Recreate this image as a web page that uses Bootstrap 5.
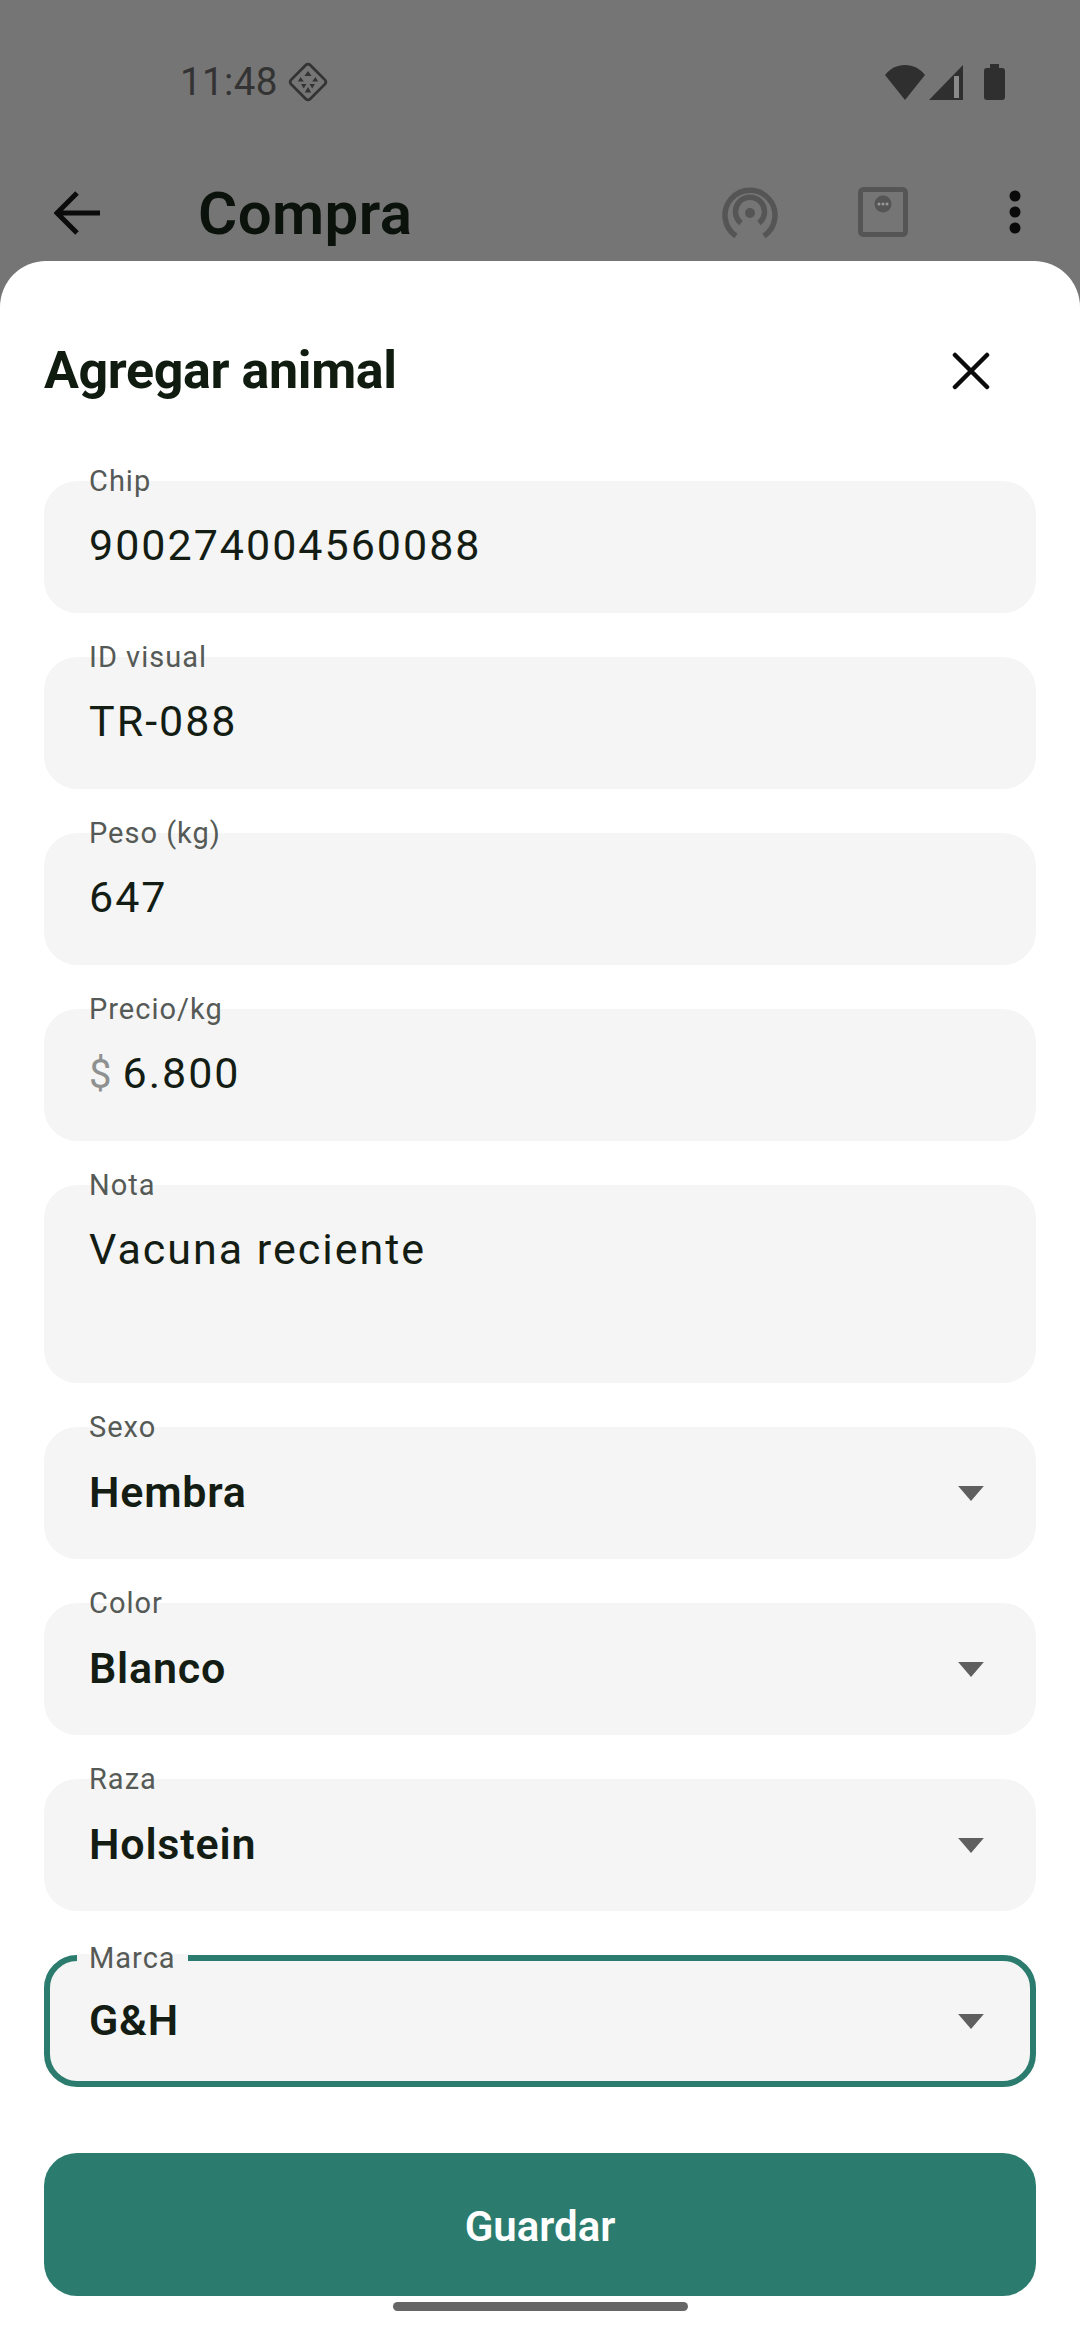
<!doctype html>
<html lang="es">
<head>
<meta charset="utf-8">
<title>Agregar animal</title>
<link href="https://cdn.jsdelivr.net/npm/bootstrap@5.3.0/dist/css/bootstrap.min.css" rel="stylesheet">
<style>
html,body{width:1080px;height:2340px;margin:0;overflow:hidden;background:#757575;font-family:Roboto,"Liberation Sans",sans-serif}
.status-row{height:164px;padding:0 75px 0 180px}
.clock{font-size:38.5px;color:#333;letter-spacing:.4px;line-height:1}
.top-bar{height:97px;padding-left:54px}
.top-title{font-size:60px;font-weight:600;color:#0b120b;letter-spacing:.4px;line-height:1;margin-left:98px;position:relative;top:1px}
.sheet{height:2079px;background:#fff;border-radius:46px 46px 0 0;padding:80px 44px 0}
.sheet-title{font-size:52px;font-weight:700;color:#101c10;letter-spacing:-.4px;line-height:60px;margin:0}
.sheet-head{height:60px;margin-bottom:80px;padding-right:46px}
.stack{gap:44px}
.fld{height:132px;background:#f5f5f5;border-radius:33px;padding:0 45px;color:#141d14;font-size:43px;letter-spacing:2px;line-height:128px}
.fld-tall{height:198px}
.fld-sel{font-weight:600;letter-spacing:.8px;padding-bottom:3px}
.fld-focus{border:6px solid #2b7c6e;padding:0 39px 3px;height:132px}
.fld-label{position:absolute;left:45px;top:-19px;font-size:29px;font-weight:400;letter-spacing:1px;line-height:38px;color:#555a56}
.fld-focus .fld-label{left:27px;top:-22px;padding:0 12px;background:linear-gradient(#fff 0 40%,#f5f5f5 40%);}
.prefix{color:#8e918f;font-size:40px;margin-right:11px;letter-spacing:0}
.caret-ic{width:28px;height:15px;flex:none;margin-right:6px;margin-top:4px}
.save{height:143px;margin-top:66px;padding-top:10px;border-radius:33px;background:#2b7c6e;border:0;color:#fff;font-size:42px;font-weight:600;letter-spacing:0}
.home-bar{width:295px;height:9px;border-radius:5px;background:#666;margin:6px auto 0}
</style>
</head>
<body>
<div class="d-flex align-items-center status-row">
  <span class="clock">11:48</span>
  <svg style="margin-left:9px" width="42" height="42" viewBox="0 0 42 42" fill="none">
    <rect x="7.500" y="7.500" width="27" height="27" rx="3" transform="rotate(45 21 21)" stroke="#333" stroke-width="2.800"/>
    <path d="M21 10l3.600 5h-7.200zM13.500 16l3.400 4.500h-6zM28.500 16l2.600 4.500h-6zM14 23h5.500l-2.800 4.500zM22.500 23h5.500l-2.800 4.500zM21 26l3.200 5.500h-6.400z" fill="#333"/>
  </svg>
  <div class="ms-auto d-flex align-items-center">
    <svg width="40" height="35" viewBox="0 0 40 35"><path d="M0 10C5 3.500 12 0 20 0s15 3.500 20 10L20 35z" fill="#2f2f2f"/></svg>
    <svg class="ms-1" width="35" height="35" viewBox="0 0 35 35"><path d="M34 0v35H0z" fill="#2f2f2f"/><path d="M25 11h5v22h-5z" fill="#8a8a8a"/></svg>
    <svg style="margin-left:20px" width="21" height="36" viewBox="0 0 21 36"><path d="M6 0h9v4h3a3 3 0 0 1 3 3v26a3 3 0 0 1-3 3H3a3 3 0 0 1-3-3V7a3 3 0 0 1 3-3h3z" fill="#2f2f2f"/></svg>
  </div>
</div>
<div class="d-flex align-items-center top-bar">
  <svg width="46" height="44" viewBox="0 0 46 44" fill="none" stroke="#0b0b0b" stroke-width="5"><path d="M46 22H4M23 2 3 22l20 20"/></svg>
  <span class="top-title">Compra</span>
  <div class="ms-auto d-flex align-items-center position-relative" style="top:-1px">
    <svg width="56" height="52" viewBox="0 0 56 52" fill="none" stroke="#555" stroke-width="5.500">
      <path d="M14 50A25 25 0 1 1 42 50"/>
      <path d="M19 37A14.500 14.500 0 1 1 37 37"/>
      <circle cx="28" cy="27" r="5" fill="#555" stroke="none"/>
    </svg>
    <svg style="margin-left:80px" width="50" height="50" viewBox="0 0 50 50" fill="none">
      <rect x="2.500" y="2.500" width="45" height="45" rx="3" stroke="#555" stroke-width="5"/>
      <circle cx="25" cy="17" r="8.500" fill="#555"/>
      <circle cx="21" cy="17" r="1.500" fill="#999"/><circle cx="25" cy="17" r="1.500" fill="#999"/><circle cx="29" cy="17" r="1.500" fill="#999"/>
    </svg>
    <svg style="margin-left:101px;margin-right:59px" width="12" height="44" viewBox="0 0 12 44" fill="#0a0a0a"><circle cx="6" cy="6" r="5.500"/><circle cx="6" cy="22" r="5.500"/><circle cx="6" cy="38" r="5.500"/></svg>
  </div>
</div>
<main class="sheet d-flex flex-column">
  <div class="d-flex align-items-center justify-content-between sheet-head">
    <h1 class="sheet-title">Agregar animal</h1>
    <svg width="38" height="38" viewBox="0 0 38 38" fill="none" stroke="#0b0b0b" stroke-width="4.500" stroke-linecap="round"><path d="M3 3l32 32M35 3 3 35"/></svg>
  </div>
  <div class="d-flex flex-column stack">
    <div class="fld position-relative"><span class="fld-label">Chip</span>900274004560088</div>
    <div class="fld position-relative"><span class="fld-label">ID visual</span>TR-088</div>
    <div class="fld position-relative"><span class="fld-label">Peso (kg)</span>647</div>
    <div class="fld position-relative"><span class="fld-label">Precio/kg</span><span class="prefix">$</span>6.800</div>
    <div class="fld fld-tall position-relative"><span class="fld-label">Nota</span>Vacuna reciente</div>
    <div class="fld fld-sel position-relative d-flex justify-content-between align-items-center"><span class="fld-label">Sexo</span>Hembra<svg class="caret-ic" viewBox="0 0 26 14"><path d="M1 0h24L13 14z" fill="#5f5f5f"/></svg></div>
    <div class="fld fld-sel position-relative d-flex justify-content-between align-items-center"><span class="fld-label">Color</span>Blanco<svg class="caret-ic" viewBox="0 0 26 14"><path d="M1 0h24L13 14z" fill="#5f5f5f"/></svg></div>
    <div class="fld fld-sel position-relative d-flex justify-content-between align-items-center"><span class="fld-label">Raza</span>Holstein<svg class="caret-ic" viewBox="0 0 26 14"><path d="M1 0h24L13 14z" fill="#5f5f5f"/></svg></div>
    <div class="fld fld-sel fld-focus position-relative d-flex justify-content-between align-items-center"><span class="fld-label">Marca</span>G&amp;H<svg class="caret-ic" viewBox="0 0 26 14"><path d="M1 0h24L13 14z" fill="#5f5f5f"/></svg></div>
  </div>
  <button type="button" class="btn w-100 save">Guardar</button>
  <div class="home-bar"></div>
</main>
<script src="https://cdn.jsdelivr.net/npm/bootstrap@5.3.0/dist/js/bootstrap.bundle.min.js"></script>
</body>
</html>
